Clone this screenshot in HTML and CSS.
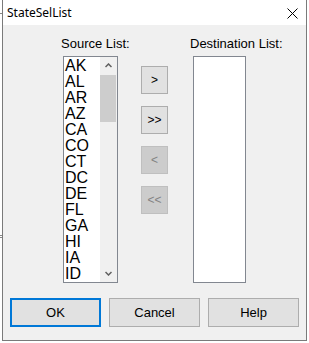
FILE: index.html
```html
<!DOCTYPE html>
<html lang="en">
<head>
    <meta charset="UTF-8">
    <title>StateSelList</title>
    <link rel="stylesheet" href="styles.css">
</head>
<body>
    <div class="mark m1"></div>
    <div class="mark m2"></div>
    <div class="mark m3"></div>
    <div class="win">
        <div class="titlebar">
            <span class="title">StateSelList</span>
            <svg class="close" width="11" height="11" viewBox="0 0 11 11"><path d="M0.5 0.5 L10.5 10.5 M10.5 0.5 L0.5 10.5" stroke="#000" stroke-width="1" fill="none"/></svg>
        </div>
        <div class="client">
            <div class="lists">
                <div class="col src">
                    <div class="label">Source List:</div>
                    <div class="listbox src-box">
                        <ul class="items">
                            <li>AK</li><li>AL</li><li>AR</li><li>AZ</li><li>CA</li><li>CO</li><li>CT</li>
                            <li>DC</li><li>DE</li><li>FL</li><li>GA</li><li>HI</li><li>IA</li><li>ID</li>
                        </ul>
                        <div class="scrollbar">
                            <div class="arrow"><svg width="7" height="5" viewBox="0 0 7 5"><polyline points="0.5,4 3.5,1 6.5,4" stroke="#606060" stroke-width="1.5" fill="none"/></svg></div>
                            <div class="track"><div class="thumb"></div></div>
                            <div class="arrow"><svg width="7" height="5" viewBox="0 0 7 5"><polyline points="0.5,1 3.5,4 6.5,1" stroke="#606060" stroke-width="1.5" fill="none"/></svg></div>
                        </div>
                    </div>
                </div>
                <div class="movebtns">
                    <button class="mv">&gt;</button>
                    <button class="mv">&gt;&gt;</button>
                    <button class="mv" disabled>&lt;</button>
                    <button class="mv" disabled>&lt;&lt;</button>
                </div>
                <div class="col dst">
                    <div class="label">Destination List:</div>
                    <div class="listbox dst-box"></div>
                </div>
            </div>
            <div class="footer">
                <button class="btn default">OK</button>
                <button class="btn">Cancel</button>
                <button class="btn">Help</button>
            </div>
        </div>
    </div>
</body>
</html>
```

FILE: styles.css
```css
body { margin: 0; background: #fff; font-family: "Liberation Sans", Arial, sans-serif; font-size: 13px; position: relative; }
.mark { position: absolute; left: 0; width: 2px; height: 1px; background: #888; }
.m1 { top: 13px; }
.m2 { top: 235px; }
.m3 { top: 237px; }
.win { margin-left: 2px; width: 305px; height: 341px; box-sizing: border-box; border: 1px solid #7a7a7a; border-top: none; display: flex; flex-direction: column; }
.titlebar { height: 25px; background: #fff; display: flex; align-items: center; justify-content: space-between; padding: 0 8px 0 4px; }
.title { font-family: "Noto Sans", sans-serif; font-size: 12px; line-height: 25px; color: #000; }
.close { display: block; margin-top: 1px; }
.client { flex: 1; background: #f0f0f0; }
.lists { display: flex; padding: 11px 0 0 58px; }
.label { line-height: 15px; white-space: nowrap; color: #000; }
.src { width: 57px; }
.dst { margin-left: 22px; }
.listbox { box-sizing: border-box; height: 227px; margin-top: 5px; background: #fff; border: 1px solid #828790; }
.src-box { width: 55px; margin-left: 2px; display: flex; overflow: hidden; }
.dst-box { width: 53px; margin-left: 3px; }
.items { list-style: none; margin: 0; padding: 1px 0 0 1px; flex: 1; font-size: 16px; line-height: 16px; color: #000; }
.scrollbar { width: 17px; background: #f0f0f0; display: flex; flex-direction: column; }
.arrow { height: 17px; display: flex; align-items: center; justify-content: center; }
.track { flex: 1; }
.thumb { margin: 1px 1px 0 0; height: 47px; background: #cdcdcd; }
.movebtns { margin-left: 23px; padding-top: 30px; display: flex; flex-direction: column; gap: 12px; }
.mv { width: 27px; height: 28px; padding: 0; background: #e1e1e1; border: 1px solid #adadad; font-family: "Liberation Sans", Arial, sans-serif; font-size: 12px; color: #000; }
.mv:disabled { background: #cccccc; border-color: #bfbfbf; color: #838383; }
.footer { display: flex; gap: 8px; margin-top: 15px; padding-left: 7px; }
.btn { width: 91px; height: 29px; padding: 0; background: #e1e1e1; border: 1px solid #adadad; font-family: "Liberation Sans", Arial, sans-serif; font-size: 13px; color: #000; }
.btn.default { border: 2px solid #0078d7; }
```
